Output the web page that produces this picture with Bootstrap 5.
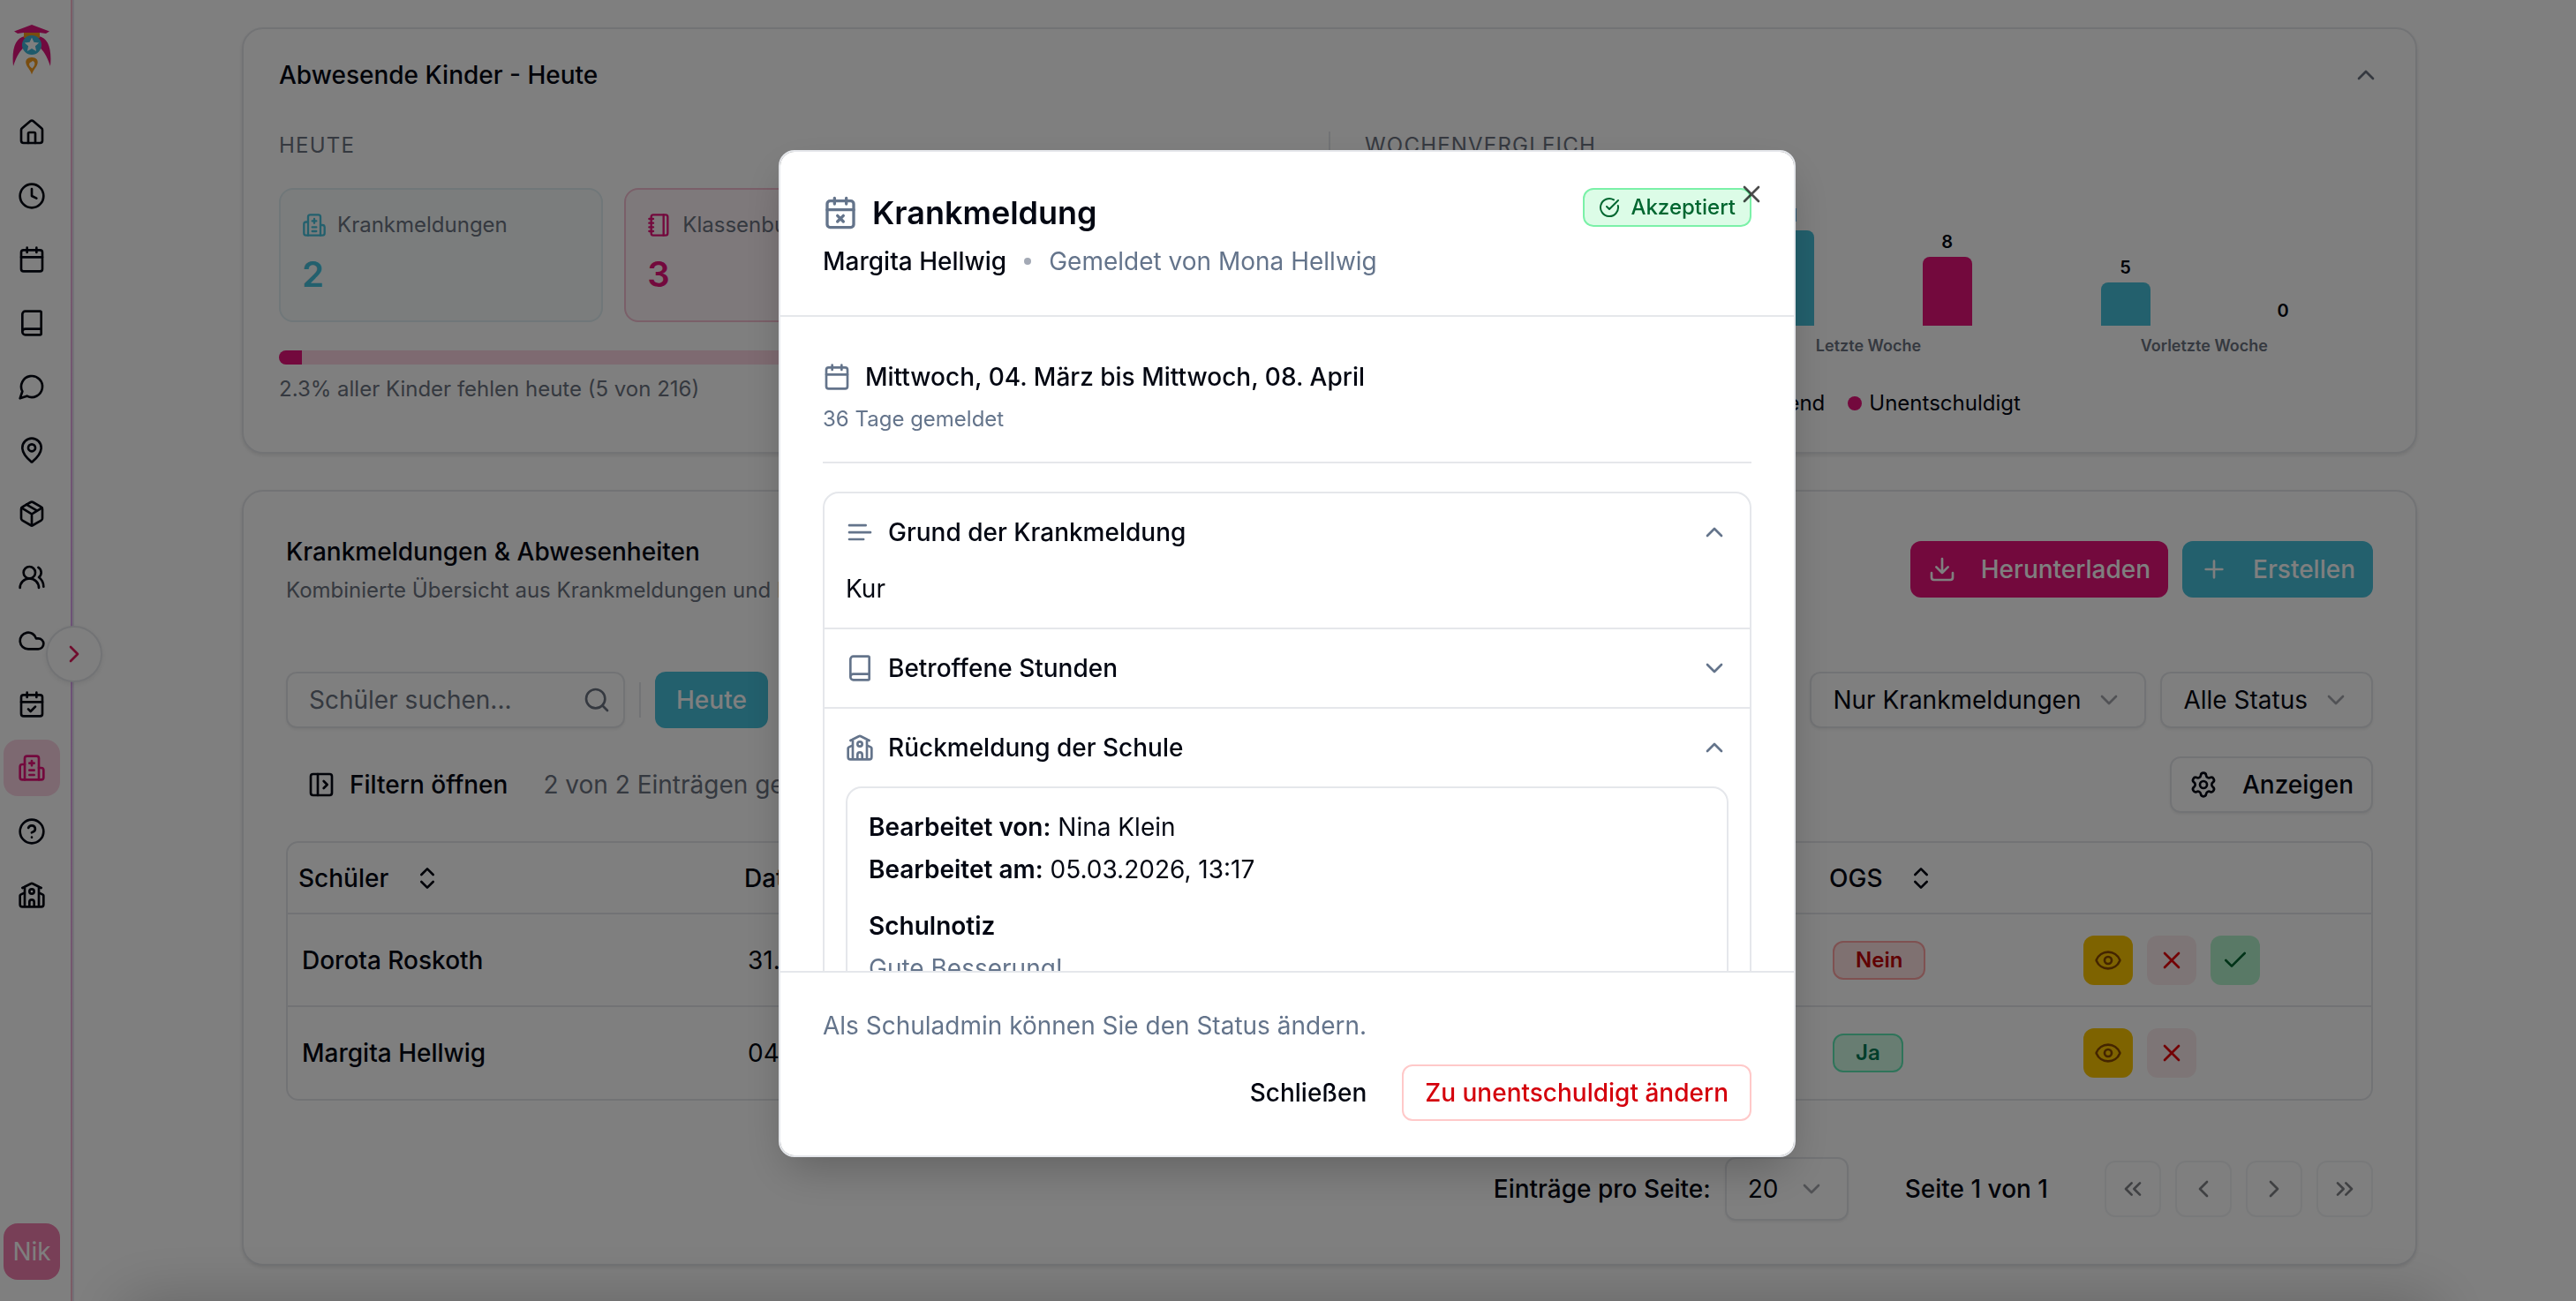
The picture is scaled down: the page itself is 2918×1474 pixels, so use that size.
<!DOCTYPE html>
<html lang="de">
<head>
<meta charset="utf-8">
<title>Krankmeldungen &amp; Abwesenheiten</title>
<meta name="viewport" content="width=device-width, initial-scale=1">
<link href="https://cdn.jsdelivr.net/npm/bootstrap@5.3.0/dist/css/bootstrap.min.css" rel="stylesheet">
<style>
  :root{--ink:#030712;--muted:#6b7280;--line:#e5e7eb;--pink:#e6127a;--cyan:#46c0da}
  html{font-size:32px}
  body{font-family:Inter,"Liberation Sans",sans-serif;font-size:28px;line-height:40px;color:var(--ink);background:#fff;height:1474px;overflow:hidden}
  .ico{width:32px;height:32px;fill:none;stroke:currentColor;stroke-width:2;stroke-linecap:round;stroke-linejoin:round;flex:none;display:block}
  .ico-24{width:24px;height:24px}.ico-28{width:28px;height:28px;margin-right:12px}.ico-40{width:40px;height:40px}
  .soft{color:var(--muted)}
  .faint{color:#8b8f96;opacity:.8}
  .fs-xs{font-size:24px;line-height:32px}
  .fw-5{font-weight:500}
  .gap-16{gap:16px}.gap-24{gap:24px}.gap-28{gap:28px}

  .side{width:84px;height:1474px;padding:28px 12px 24px 4px;position:relative;flex:none}
  .side::after{content:"";position:absolute;right:0;top:0;bottom:0;width:4px;background:linear-gradient(90deg,transparent 50%,#e6e4ef 50%),linear-gradient(#f8b8cc,#d9a2f0 50%,#f8b8cc)}
  .brand{width:44px;height:58px;margin:0 0 32px 10px}
  .side .nav{gap:8px}
  .side .nav-link{width:64px;height:64px;padding:0;border-radius:16px;color:var(--ink);display:flex;align-items:center;justify-content:center}
  .side .nav-link.active{background:#fbd3e3;color:var(--pink)}
  .avatar{width:64px;height:64px;border-radius:16px;background:#f17fae;color:#fff;display:flex;align-items:center;justify-content:center}
  .toggle{position:absolute;left:52px;top:709px;width:64px;height:64px;border-radius:50%;border:2px solid var(--line);background:#fff;color:#e11d5c;display:flex;align-items:center;justify-content:center;z-index:2;box-shadow:0 2px 6px rgba(0,0,0,.08)}

  .page{padding:31px 0 0 190px}
  .panel{width:2464px;border:2px solid var(--line);border-radius:24px;background:#fff;box-shadow:0 2px 4px rgba(0,0,0,.1)}
  .panel-a{height:483px;padding:32px 40px}
  .panel-b{height:879px;margin-top:41px;padding:48px}
  .caps{letter-spacing:.05em;text-transform:uppercase;margin-bottom:32px}
  .split{margin-top:44px;gap:80px}
  .split>div{flex:1 1 0}
  .split>.rule{flex:none;width:2px;margin:0 -41px;background:var(--line);height:330px}
  .stat{flex:1 1 0;height:152px;border:2px solid;border-radius:16px;padding:24px}
  .stat-c{border-color:#e0eef2;background:#f6fafb}.stat-c .hue{color:var(--cyan)}
  .stat-p{border-color:#f5bfd2;background:#fdf2f6}.stat-p .hue{color:var(--pink)}
  .stat-n{font-size:40px;line-height:56px;font-weight:600;margin-top:12px}
  .meter{height:16px;border-radius:8px;background:#fdd5e2;margin:32px 0 12px}
  .meter .progress-bar{background:var(--pink)}

  .chart{height:158px;margin-top:-2px;padding-right:9px}
  .week{flex:1 1 0;padding:0 73px}
  .barcol{width:56px;text-align:center;font-size:20px;line-height:24px;font-weight:600}
  .barcol .bar{border-radius:8px 8px 0 0;margin-top:5px;width:56px}
  .bar-c{background:var(--cyan)}.bar-p{background:var(--pink)}
  .weeks{padding-right:9px;margin-top:11px}
  .wlabel{font-size:18px;line-height:24px;font-weight:600;color:var(--muted);text-align:center;flex:1 1 0}
  .legend{margin-top:37px;gap:8px}
  .legend .dot+.dot,.legend .second{margin-left:18px}
  .dot{width:16px;height:16px;border-radius:50%}

  .bt{height:64px;border-radius:12px;font-size:28px;line-height:40px;padding:0 20px;display:flex;align-items:center;border:0;color:var(--ink);white-space:nowrap}
  .bt-p{background:var(--pink);color:#fff}.bt-c{background:var(--cyan);color:#fff}
  .bt-o{border:2px solid var(--line);background:#fff;box-shadow:0 2px 3px rgba(0,0,0,.06)}
  .pick{padding:0 24px}
  .search{width:384px;padding:0 14px 0 24px;color:var(--muted)}
  .vr-s{width:2px;height:40px;background:var(--line)}
  .bar-row{margin-top:32px}
  .tbl{margin-top:32px;border:2px solid var(--line);border-radius:14px;overflow:hidden}
  .tbl table{table-layout:fixed;margin:0;width:100%;color:var(--ink)}
  .tbl th{height:80px;padding:0 12px;font-weight:500;vertical-align:middle;border:0}
  .tbl td{height:105px;padding:0 16px;vertical-align:middle;border:0;border-top:2px solid var(--line)}
  .pill{display:inline-flex;align-items:center;height:44px;border:2px solid;border-radius:12px;padding:0 24px;font-size:24px;line-height:32px;font-weight:600}
  .pill-r{background:#ffe2e2;border-color:#ffa2a2;color:#c10007}
  .pill-g{background:#d0fae5;border-color:#5ee9b5;color:#007a55}
  .act{width:56px;height:56px;border-radius:12px;display:flex;align-items:center;justify-content:center}
  .act-y{background:#fdc700;color:#894b00}.act-r{background:#fbebec;color:#e7000b}.act-g{background:#b3f2cd;color:#016630}
  .pager{margin-top:64px}
  .per-page{height:72px;width:140px;margin:0 64px 0 16px}
  .pg{width:64px;height:64px;padding:0;justify-content:center;opacity:.5;box-shadow:none}
  .dock{position:fixed;left:160px;right:180px;top:1494px;height:60px;box-shadow:0 0 70px 20px rgba(0,0,0,.22)}

  .modal-backdrop{--bs-backdrop-bg:#000}
  .dlg{--bs-modal-width:1152px;margin:170px 0 0 882px;width:1152px;max-width:none}
  .dlg .modal-content{height:1141px;border:2px solid var(--line);border-radius:18px;color:var(--ink);box-shadow:0 20px 50px -10px rgba(0,0,0,.25);overflow:hidden}
  .dlg .modal-header{display:block;height:187px;padding:49px 48px 0;border-bottom:2px solid var(--line);border-radius:0}
  .dlg .modal-title{font-size:36px;line-height:40px;font-weight:600}
  .dlg .modal-body{height:741px;flex:none;padding:48px;overflow:hidden}
  .dlg .modal-footer{display:block;padding:40px 46px 38px;border-top:2px solid var(--line)}
  .dlg .modal-footer>*{margin:0 2px}
  .dlg .sub{margin-top:15px}
  .dlg .sep{width:8px;height:8px;background:#a3a9b5;margin:0 20px}
  .status{height:44px;margin:-8px 0 -2px;border:2px solid #7bf1a8;border-radius:12px;background:#dcfce7;color:#016630;font-size:24px;line-height:32px;font-weight:500;padding:0 16px;gap:12px}
  .closer{position:absolute;left:1084px;top:32px;opacity:.7;padding:0;border:0;background:none;color:#000}
  .acc{border:2px solid var(--line);border-radius:18px}
  .acc-row{height:88px;padding:0 24px;font-weight:500;gap:16px}
  .acc-item+.acc-item{border-top:2px solid var(--line)}
  .note{border:2px solid var(--line);border-radius:18px;margin:0 24px 24px;padding:24px}
  .slate{color:#64748b}
  .bt-ghost{background:none;padding:0 24px}
  .bt-danger{background:#fff;border:2px solid #ffc9c9;color:#d4000c;padding:0 24px}
</style>
</head>
<body>
<svg width="0" height="0" class="position-absolute" aria-hidden="true">
  <symbol id="home" viewBox="0 0 24 24"><path d="M15 21v-8a1 1 0 0 0-1-1h-4a1 1 0 0 0-1 1v8"/><path d="M3 10a2 2 0 0 1 .709-1.528l7-5.999a2 2 0 0 1 2.582 0l7 5.999A2 2 0 0 1 21 10v9a2 2 0 0 1-2 2H5a2 2 0 0 1-2-2z"/></symbol>
  <symbol id="clock" viewBox="0 0 24 24"><circle cx="12" cy="12" r="10"/><path d="M12 6v6l4 2"/></symbol>
  <symbol id="cal" viewBox="0 0 24 24"><path d="M8 2v4M16 2v4M3 10h18"/><rect width="18" height="18" x="3" y="4" rx="2"/></symbol>
  <symbol id="calcheck" viewBox="0 0 24 24"><path d="M8 2v4M16 2v4M3 10h18m-12 6 2 2 4-4"/><rect width="18" height="18" x="3" y="4" rx="2"/></symbol>
  <symbol id="calx" viewBox="0 0 24 24"><path d="M8 2v4M16 2v4M3 10h18M14 14l-4 4M10 14l4 4"/><rect width="18" height="18" x="3" y="4" rx="2"/></symbol>
  <symbol id="book" viewBox="0 0 24 24"><path d="M4 19.5v-15A2.5 2.5 0 0 1 6.5 2H19a1 1 0 0 1 1 1v18a1 1 0 0 1-1 1H6.5a1 1 0 0 1 0-5H20"/></symbol>
  <symbol id="chat" viewBox="0 0 24 24"><path d="M7.9 20A9 9 0 1 0 4 16.1L2 22Z"/></symbol>
  <symbol id="pin" viewBox="0 0 24 24"><path d="M20 10c0 4.993-5.539 10.193-7.399 11.799a1 1 0 0 1-1.202 0C9.539 20.193 4 14.993 4 10a8 8 0 0 1 16 0"/><circle cx="12" cy="10" r="3"/></symbol>
  <symbol id="box" viewBox="0 0 24 24"><path d="M11 21.73a2 2 0 0 0 2 0l7-4A2 2 0 0 0 21 16V8a2 2 0 0 0-1-1.73l-7-4a2 2 0 0 0-2 0l-7 4A2 2 0 0 0 3 8v8a2 2 0 0 0 1 1.73z"/><path d="M12 22V12M3.3 7l7.703 4.734a2 2 0 0 0 1.994 0L20.7 7M7.5 4.27l9 5.15"/></symbol>
  <symbol id="users" viewBox="0 0 24 24"><path d="M18 21a8 8 0 0 0-16 0"/><circle cx="10" cy="8" r="5"/><path d="M22 20c0-3.37-2-6.5-4-8a5 5 0 0 0-.45-8.3"/></symbol>
  <symbol id="cloud" viewBox="0 0 24 24"><path d="M17.5 19H9a7 7 0 1 1 6.71-9h1.79a4.5 4.5 0 1 1 0 9Z"/></symbol>
  <symbol id="hospital" viewBox="0 0 24 24"><path d="M12 6v4M14 14h-4M14 18h-4M14 8h-4"/><path d="M18 12h2a2 2 0 0 1 2 2v6a2 2 0 0 1-2 2H4a2 2 0 0 1-2-2v-9a2 2 0 0 1 2-2h2"/><path d="M18 22V4a2 2 0 0 0-2-2H8a2 2 0 0 0-2 2v18"/></symbol>
  <symbol id="help" viewBox="0 0 24 24"><circle cx="12" cy="12" r="10"/><path d="M9.09 9a3 3 0 0 1 5.83 1c0 2-3 3-3 3M12 17h.01"/></symbol>
  <symbol id="school" viewBox="0 0 24 24"><path d="M14 22v-4a2 2 0 1 0-4 0v4M18 10l3.447 1.724a1 1 0 0 1 .553.894V20a2 2 0 0 1-2 2H4a2 2 0 0 1-2-2v-7.382a1 1 0 0 1 .553-.894L6 10M18 5v17M4 6l7.106-3.553a2 2 0 0 1 1.788 0L20 6M6 5v17"/><circle cx="12" cy="9" r="2"/></symbol>
  <symbol id="notebook" viewBox="0 0 24 24"><path d="M2 6h4M2 10h4M2 14h4M2 18h4M16 2v20"/><rect width="16" height="20" x="4" y="2" rx="2"/></symbol>
  <symbol id="okay" viewBox="0 0 24 24"><path d="M21.801 10A10 10 0 1 1 17 3.335M9 11l3 3L22 4"/></symbol>
  <symbol id="find" viewBox="0 0 24 24"><circle cx="11" cy="11" r="8"/><path d="m21 21-4.3-4.3"/></symbol>
  <symbol id="panelopen" viewBox="0 0 24 24"><rect width="18" height="18" x="3" y="3" rx="2"/><path d="M9 3v18M14 9l3 3-3 3"/></symbol>
  <symbol id="download" viewBox="0 0 24 24"><path d="M21 15v4a2 2 0 0 1-2 2H5a2 2 0 0 1-2-2v-4M7 10l5 5 5-5M12 15V3"/></symbol>
  <symbol id="plus" viewBox="0 0 24 24"><path d="M5 12h14M12 5v14"/></symbol>
  <symbol id="gear" viewBox="0 0 24 24"><path d="M9.671 4.136a2.34 2.34 0 0 1 4.659 0 2.34 2.34 0 0 0 3.319 1.915 2.34 2.34 0 0 1 2.33 4.033 2.34 2.34 0 0 0 0 3.831 2.34 2.34 0 0 1-2.33 4.033 2.34 2.34 0 0 0-3.319 1.915 2.34 2.34 0 0 1-4.659 0 2.34 2.34 0 0 0-3.32-1.915 2.34 2.34 0 0 1-2.33-4.033 2.34 2.34 0 0 0 0-3.831A2.34 2.34 0 0 1 6.35 6.051a2.34 2.34 0 0 0 3.319-1.915"/><circle cx="12" cy="12" r="3"/></symbol>
  <symbol id="eye" viewBox="0 0 24 24"><path d="M2.062 12.348a1 1 0 0 1 0-.696 10.75 10.75 0 0 1 19.876 0 1 1 0 0 1 0 .696 10.75 10.75 0 0 1-19.876 0"/><circle cx="12" cy="12" r="3"/></symbol>
  <symbol id="cross" viewBox="0 0 24 24"><path d="M18 6 6 18M6 6l12 12"/></symbol>
  <symbol id="tick" viewBox="0 0 24 24"><path d="M20 6 9 17l-5-5"/></symbol>
  <symbol id="up" viewBox="0 0 24 24"><path d="m18 15-6-6-6 6"/></symbol>
  <symbol id="down" viewBox="0 0 24 24"><path d="m6 9 6 6 6-6"/></symbol>
  <symbol id="right" viewBox="0 0 24 24"><path d="m9 18 6-6-6-6"/></symbol>
  <symbol id="left" viewBox="0 0 24 24"><path d="m15 18-6-6 6-6"/></symbol>
  <symbol id="first" viewBox="0 0 24 24"><path d="m11 17-5-5 5-5M18 17l-5-5 5-5"/></symbol>
  <symbol id="last" viewBox="0 0 24 24"><path d="m6 17 5-5-5-5M13 17l5-5-5-5"/></symbol>
  <symbol id="sort" viewBox="0 0 24 24"><path d="m7 15 5 5 5-5M7 9l5-5 5 5"/></symbol>
  <symbol id="lines" viewBox="0 0 24 24"><path d="M17 6.1H3M21 12.1H3M15.1 18H3"/></symbol>
</svg>

<div class="d-flex">
  <aside class="side d-flex flex-column align-items-start">
    <svg class="brand" viewBox="0 0 44 58">
      <path d="M1 47C-1 26 4 15 14 13H30C40 15 45 26 43 47C39 35 35 29 30 25H14C9 29 5 35 1 47Z" fill="#e0157c"/>
      <path d="M2 7.500 22 0 42 7.500 38 10 31 9H13L6 10Z" fill="#e0157c"/>
      <path d="M13 9H31V15H13Z" fill="#f39a1e"/>
      <ellipse cx="22" cy="23" rx="11" ry="11" fill="#3fb4d6"/>
      <path d="m22 14.500 2.400 5.300 5.800.6-4.300 3.900 1.200 5.700-5.100-2.900-5.100 2.900 1.200-5.700-4.300-3.900 5.800-.6z" fill="#fff"/>
      <path d="M22 37c5 0 7.500 3 6.500 7-1 4.500-4.500 6-6.500 12.500-2-6.500-5.500-8-6.500-12.500-1-4 1.500-7 6.500-7Z" fill="#f39a1e"/>
      <path d="M23 41c3 1 3.500 4.500-.5 8.500-4.500-3-4-6.500-1.500-7Z" fill="#fff"/>
    </svg>
    <nav class="nav flex-column">
      <a class="nav-link"><svg class="ico"><use href="#home"/></svg></a>
      <a class="nav-link"><svg class="ico"><use href="#clock"/></svg></a>
      <a class="nav-link"><svg class="ico"><use href="#cal"/></svg></a>
      <a class="nav-link"><svg class="ico"><use href="#book"/></svg></a>
      <a class="nav-link"><svg class="ico"><use href="#chat"/></svg></a>
      <a class="nav-link"><svg class="ico"><use href="#pin"/></svg></a>
      <a class="nav-link"><svg class="ico"><use href="#box"/></svg></a>
      <a class="nav-link"><svg class="ico"><use href="#users"/></svg></a>
      <a class="nav-link"><svg class="ico"><use href="#cloud"/></svg></a>
      <a class="nav-link"><svg class="ico"><use href="#calcheck"/></svg></a>
      <a class="nav-link active"><svg class="ico"><use href="#hospital"/></svg></a>
      <a class="nav-link"><svg class="ico"><use href="#help"/></svg></a>
      <a class="nav-link"><svg class="ico"><use href="#school"/></svg></a>
    </nav>
    <div class="avatar mt-auto">Nik</div>
    <div class="toggle"><svg class="ico"><use href="#right"/></svg></div>
  </aside>

  <main class="page">
    <section class="panel panel-a">
      <div class="d-flex justify-content-between align-items-center">
        <div class="fw-5">Abwesende Kinder - Heute</div>
        <svg class="ico soft"><use href="#up"/></svg>
      </div>
      <div class="split d-flex">
        <div>
          <div class="caps fs-xs soft">Heute</div>
          <div class="d-flex gap-24">
            <div class="stat stat-c">
              <div class="d-flex align-items-center fs-xs soft"><svg class="ico ico-28 hue"><use href="#hospital"/></svg>Krankmeldungen</div>
              <div class="stat-n hue">2</div>
            </div>
            <div class="stat stat-p">
              <div class="d-flex align-items-center fs-xs soft"><svg class="ico ico-28 hue"><use href="#notebook"/></svg>Klassenbuch</div>
              <div class="stat-n hue">3</div>
            </div>
            <div class="stat stat-p">
              <div class="fs-xs soft">Gesamt</div>
              <div class="stat-n hue">5</div>
            </div>
          </div>
          <div class="progress meter"><div class="progress-bar" style="width:2.3%"></div></div>
          <div class="fs-xs soft">2.3% aller Kinder fehlen heute (5 von 216)</div>
        </div>
        <div class="rule"></div>
        <div>
          <div class="caps fs-xs soft">Wochenvergleich</div>
          <div class="chart d-flex">
            <div class="week d-flex justify-content-between align-items-end">
              <div class="barcol">2<div class="bar bar-c" style="height:20px"></div></div>
              <div class="barcol">3<div class="bar bar-p" style="height:29px"></div></div>
            </div>
            <div class="week d-flex justify-content-between align-items-end">
              <div class="barcol">11<div class="bar bar-c" style="height:108px"></div></div>
              <div class="barcol">8<div class="bar bar-p" style="height:78px"></div></div>
            </div>
            <div class="week d-flex justify-content-between align-items-end">
              <div class="barcol">5<div class="bar bar-c" style="height:49px"></div></div>
              <div class="barcol">0<div class="bar bar-p" style="height:0"></div></div>
            </div>
          </div>
          <div class="weeks d-flex">
            <div class="wlabel">Diese Woche</div><div class="wlabel">Letzte Woche</div><div class="wlabel">Vorletzte Woche</div>
          </div>
          <div class="legend d-flex justify-content-center align-items-center fs-xs">
            <span class="dot bar-c"></span><span>Fehlend</span>
            <span class="dot bar-p second"></span><span>Unentschuldigt</span>
          </div>
        </div>
      </div>
    </section>

    <section class="panel panel-b">
      <div class="d-flex justify-content-between align-items-center">
        <div>
          <div class="fw-5">Krankmeldungen &amp; Abwesenheiten</div>
          <div class="fs-xs soft" style="margin-top:8px">Kombinierte Übersicht aus Krankmeldungen und Klassenbuch</div>
        </div>
        <div class="d-flex gap-16">
          <button class="bt bt-p fw-5 gap-28"><svg class="ico"><use href="#download"/></svg>Herunterladen</button>
          <button class="bt bt-c fw-5 gap-28"><svg class="ico"><use href="#plus"/></svg>Erstellen</button>
        </div>
      </div>
      <div class="d-flex justify-content-between" style="margin-top:76px">
        <div class="d-flex align-items-center gap-16">
          <div class="bt bt-o search justify-content-between">Schüler suchen... <svg class="ico"><use href="#find"/></svg></div>
          <div class="vr-s"></div>
          <button class="bt bt-c fw-5 pick">Heute</button>
        </div>
        <div class="d-flex gap-16">
          <div class="bt bt-o pick gap-16">Nur Krankmeldungen <svg class="ico faint"><use href="#down"/></svg></div>
          <div class="bt bt-o pick gap-16">Alle Status <svg class="ico faint"><use href="#down"/></svg></div>
        </div>
      </div>
      <div class="bar-row d-flex justify-content-between align-items-center">
        <div class="d-flex align-items-center gap-16" style="padding-left:24px">
          <svg class="ico"><use href="#panelopen"/></svg>
          <span class="fw-5">Filtern öffnen</span>
          <span class="soft" style="margin-left:24px">2 von 2 Einträgen gefunden</span>
        </div>
        <button class="bt bt-o fw-5 gap-28"><svg class="ico"><use href="#gear"/></svg>Anzeigen</button>
      </div>
      <div class="tbl">
        <table>
          <colgroup><col style="width:505px"><col style="width:420px"><col style="width:400px"><col style="width:409px"><col style="width:284px"><col></colgroup>
          <tr>
            <th><div class="d-flex align-items-center gap-28">Schüler <svg class="ico"><use href="#sort"/></svg></div></th>
            <th>Datum</th><th>Klasse</th><th>Status</th>
            <th><div class="d-flex align-items-center gap-28">OGS <svg class="ico"><use href="#sort"/></svg></div></th><th></th>
          </tr>
          <tr>
            <td class="fw-5">Dorota Roskoth</td><td>31.03.2026</td><td>2a</td><td>Offen</td>
            <td><span class="pill pill-r">Nein</span></td>
            <td><div class="d-flex gap-16"><span class="act act-y"><svg class="ico"><use href="#eye"/></svg></span><span class="act act-r"><svg class="ico"><use href="#cross"/></svg></span><span class="act act-g"><svg class="ico"><use href="#tick"/></svg></span></div></td>
          </tr>
          <tr>
            <td class="fw-5">Margita Hellwig</td><td>04.03.2026</td><td>3b</td><td>Akzeptiert</td>
            <td><span class="pill pill-g">Ja</span></td>
            <td><div class="d-flex gap-16"><span class="act act-y"><svg class="ico"><use href="#eye"/></svg></span><span class="act act-r"><svg class="ico"><use href="#cross"/></svg></span></div></td>
          </tr>
        </table>
      </div>
      <div class="pager d-flex justify-content-end align-items-center">
        <span class="fw-5">Einträge pro Seite:</span>
        <div class="bt bt-o pick per-page justify-content-between">20 <svg class="ico faint"><use href="#down"/></svg></div>
        <span class="fw-5">Seite 1 von 1</span>
        <div class="d-flex gap-16" style="margin-left:64px">
          <span class="bt bt-o pg"><svg class="ico"><use href="#first"/></svg></span>
          <span class="bt bt-o pg"><svg class="ico"><use href="#left"/></svg></span>
          <span class="bt bt-o pg"><svg class="ico"><use href="#right"/></svg></span>
          <span class="bt bt-o pg"><svg class="ico"><use href="#last"/></svg></span>
        </div>
      </div>
    </section>
  </main>
</div>
<div class="dock"></div>

<div class="modal-backdrop show"></div>
<div class="modal show d-block" tabindex="-1" role="dialog">
  <div class="modal-dialog dlg">
    <div class="modal-content">
      <div class="modal-header">
        <div class="d-flex justify-content-between align-items-start">
          <div class="d-flex align-items-center gap-16">
            <svg class="ico ico-40 slate"><use href="#calx"/></svg>
            <h2 class="modal-title">Krankmeldung</h2>
          </div>
          <div class="status d-flex align-items-center"><svg class="ico ico-24"><use href="#okay"/></svg>Akzeptiert</div>
        </div>
        <div class="sub d-flex align-items-center">
          <span class="fw-5">Margita Hellwig</span>
          <span class="dot sep"></span>
          <span class="slate">Gemeldet von Mona Hellwig</span>
        </div>
        <button class="closer"><svg class="ico"><use href="#cross"/></svg></button>
      </div>
      <div class="modal-body">
        <div class="d-flex align-items-center fw-5 gap-16"><svg class="ico slate"><use href="#cal"/></svg>Mittwoch, 04. März bis Mittwoch, 08. April</div>
        <div class="fs-xs slate" style="margin-top:12px">36 Tage gemeldet</div>
        <div style="height:2px;background:var(--line);margin:32px 0"></div>
        <div class="acc">
          <div class="acc-item">
            <div class="acc-row d-flex align-items-center"><svg class="ico slate"><use href="#lines"/></svg>Grund der Krankmeldung<svg class="ico slate ms-auto"><use href="#up"/></svg></div>
            <div style="padding:0 24px 24px">Kur</div>
          </div>
          <div class="acc-item">
            <div class="acc-row d-flex align-items-center"><svg class="ico slate"><use href="#book"/></svg>Betroffene Stunden<svg class="ico slate ms-auto"><use href="#down"/></svg></div>
          </div>
          <div class="acc-item">
            <div class="acc-row d-flex align-items-center"><svg class="ico slate"><use href="#school"/></svg>Rückmeldung der Schule<svg class="ico slate ms-auto"><use href="#up"/></svg></div>
            <div class="note">
              <div><span class="fw-semibold">Bearbeitet von:</span> Nina Klein</div>
              <div style="margin-top:8px"><span class="fw-semibold">Bearbeitet am:</span> 05.03.2026, 13:17</div>
              <div class="fw-semibold" style="margin-top:24px">Schulnotiz</div>
              <div class="slate" style="margin-top:8px">Gute Besserung!</div>
            </div>
          </div>
        </div>
      </div>
      <div class="modal-footer">
        <div class="slate">Als Schuladmin können Sie den Status ändern.</div>
        <div class="d-flex justify-content-end gap-16" style="margin-top:24px">
          <button class="bt fw-5 bt-ghost">Schließen</button>
          <button class="bt fw-5 bt-danger">Zu unentschuldigt ändern</button>
        </div>
      </div>
    </div>
  </div>
</div>
<script src="https://cdn.jsdelivr.net/npm/bootstrap@5.3.0/dist/js/bootstrap.bundle.min.js"></script>
</body>
</html>
